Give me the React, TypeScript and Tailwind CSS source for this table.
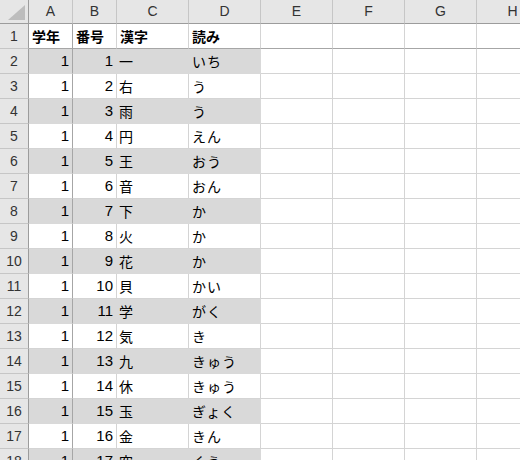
import React from 'react';

const cols = [
  { key: 'A', w: 'w-[44px]' },
  { key: 'B', w: 'w-[44px]' },
  { key: 'C', w: 'w-[72px]' },
  { key: 'D', w: 'w-[72px]' },
  { key: 'E', w: 'w-[72px]' },
  { key: 'F', w: 'w-[72px]' },
  { key: 'G', w: 'w-[72px]' },
  { key: 'H', w: 'w-[72px]' },
];

const rows: [number, number, string, string][] = [
  [1, 1, '一', 'いち'],
  [1, 2, '右', 'う'],
  [1, 3, '雨', 'う'],
  [1, 4, '円', 'えん'],
  [1, 5, '王', 'おう'],
  [1, 6, '音', 'おん'],
  [1, 7, '下', 'か'],
  [1, 8, '火', 'か'],
  [1, 9, '花', 'か'],
  [1, 10, '貝', 'かい'],
  [1, 11, '学', 'がく'],
  [1, 12, '気', 'き'],
  [1, 13, '九', 'きゅう'],
  [1, 14, '休', 'きゅう'],
  [1, 15, '玉', 'ぎょく'],
  [1, 16, '金', 'きん'],
  [1, 17, '空', 'くう'],
];

const font = "font-['Noto_Sans_CJK_JP','Noto_Sans',sans-serif]";

function RowHead({ n }: { n: number }) {
  return (
    <div className="w-[29px] shrink-0 bg-[#e6e6e6] border-r border-r-[#9c9c9c] border-b border-b-[#c6c6c6] flex items-center justify-center text-[14px] text-[#333] font-['Liberation_Sans',sans-serif]">
      {n}
    </div>
  );
}

export default function App() {
  return (
    <div className={`w-[520px] h-[460px] overflow-hidden bg-white ${font} text-[14px] text-black`}>
      {/* column headers */}
      <div className="flex h-[24px]">
        <div className="w-[29px] shrink-0 bg-[#e6e6e6] border-r border-r-[#9c9c9c] border-b border-b-[#9c9c9c] flex items-end justify-end pr-[3px] pb-[3px]">
          <svg width="17" height="15" viewBox="0 0 17 15">
            <polygon points="17,0 17,15 0,15" fill="#bdbdbd" />
          </svg>
        </div>
        {cols.map((c) => (
          <div
            key={c.key}
            className={`${c.w} shrink-0 bg-[#e6e6e6] border-r border-r-[#c6c6c6] border-b border-b-[#9c9c9c] flex items-center justify-center text-[14px] text-[#333] font-['Liberation_Sans',sans-serif]`}
          >
            {c.key}
          </div>
        ))}
      </div>

      {/* row 1 (frozen header row) */}
      <div className="flex h-[25px]">
        <RowHead n={1} />
        {['学年', '番号', '漢字', '読み', '', '', '', ''].map((t, i) => (
          <div
            key={i}
            className={`${cols[i].w} shrink-0 border-b border-b-[#a6a6a6] ${i === 0 ? 'border-r-[#a6a6a6]' : 'border-r-[#d4d4d4]'} border-r flex items-center px-[3px] font-bold leading-none`}
          >
            {t}
          </div>
        ))}
      </div>

      {rows.map((r, idx) => {
        const n = idx + 2;
        const gray = n % 2 === 0;
        const fill = gray ? 'bg-[#d9d9d9]' : 'bg-white';
        const line = gray ? 'border-[#d9d9d9]' : 'border-[#d4d4d4]';
        return (
          <div key={n} className="flex h-[25px]">
            <RowHead n={n} />
            <div className={`w-[44px] shrink-0 ${fill} border-b ${line} border-r border-r-[#a6a6a6] flex items-center justify-end px-[3px] font-['Liberation_Sans',sans-serif] text-[15px]`}>
              {r[0]}
            </div>
            <div className={`w-[44px] shrink-0 ${fill} border-b border-r ${line} flex items-center justify-end px-[3px] font-['Liberation_Sans',sans-serif] text-[15px]`}>
              {r[1]}
            </div>
            <div className={`w-[72px] shrink-0 ${fill} border-b border-r ${line} flex items-center px-[2px]`}>
              {r[2]}
            </div>
            <div className={`w-[72px] shrink-0 ${fill} border-b border-r ${line} flex items-center px-[3px] tracking-[1px]`}>
              {r[3]}
            </div>
            {cols.slice(4).map((c) => (
              <div key={c.key} className={`${c.w} shrink-0 border-b border-r border-[#d4d4d4]`} />
            ))}
          </div>
        );
      })}
    </div>
  );
}
